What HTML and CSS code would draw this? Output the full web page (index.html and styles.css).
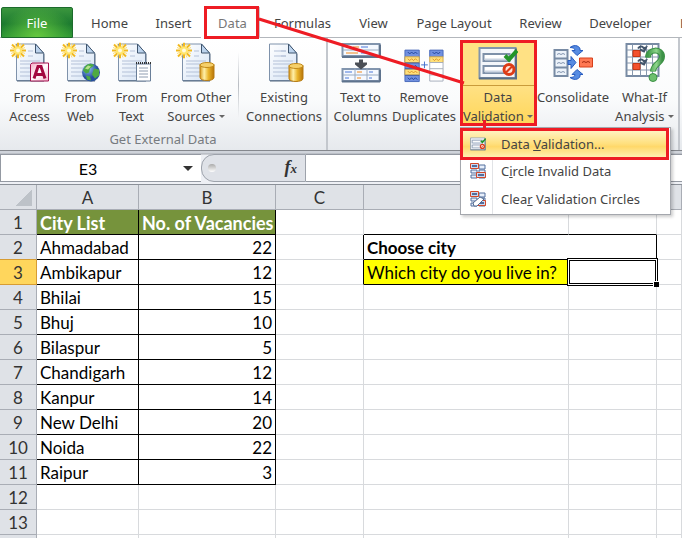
FILE: index.html
```html
<!DOCTYPE html>
<html lang="en">
<head>
<meta charset="utf-8">
<title>City List - Data Validation</title>
<link rel="stylesheet" href="styles.css">
</head>
<body>
<svg class="defs" aria-hidden="true">
  <defs>
    <linearGradient id="paper" x1="0" y1="0" x2="1" y2="1"><stop offset="0" stop-color="#fff"/><stop offset="1" stop-color="#d5e3f5"/></linearGradient>
    <linearGradient id="gold" x1="0" x2="1"><stop offset="0" stop-color="#d99a1c"/><stop offset=".3" stop-color="#fff0a8"/><stop offset=".6" stop-color="#eab52c"/><stop offset="1" stop-color="#b87408"/></linearGradient>
    <linearGradient id="pink" x1="0" y1="0" x2="1" y2="1"><stop offset="0" stop-color="#f7a9c4"/><stop offset=".5" stop-color="#fff"/><stop offset="1" stop-color="#f2b3ca"/></linearGradient>
    <radialGradient id="sea" cx=".35" cy=".3"><stop offset="0" stop-color="#8fc1f5"/><stop offset="1" stop-color="#274e9d"/></radialGradient>
    <linearGradient id="leaf" x1="0" x2="1"><stop offset="0" stop-color="#3f9a48"/><stop offset=".6" stop-color="#8fd68c"/><stop offset="1" stop-color="#3c9146"/></linearGradient>
    <symbol id="doc" viewBox="0 0 40 40">
      <path d="M6.500 1.500h19l8 9v27.500h-27z" fill="url(#paper)" stroke="#7f92ab"/>
      <path d="M7 38.500h27M34 11v27" stroke="#52677f" fill="none"/>
      <path d="M25.500 1.500v9h8z" fill="#bcd3ed" stroke="#40566f"/>
      <path d="M18 8.500h5M18 13.500h5M10 18.500h20M10 21.500h20M10 25.500h20M10 29.500h20M10 33.500h18" stroke="#b4c1d8"/>
    </symbol>
    <symbol id="spark" viewBox="0 0 16 16">
      <path d="M8 0v16M0 8h16M2 2l12 12M14 2L2 14" stroke="#f2b91e" stroke-width="2"/>
      <path d="M5 1l6 14M11 1L5 15M1 5l14 6M15 5L1 11" stroke="#ffdf6b"/>
      <circle cx="8" cy="8" r="4" fill="#ffe56e"/><circle cx="8" cy="8" r="2" fill="#fffbe0"/>
    </symbol>
    <symbol id="drum" viewBox="0 0 16 20">
      <path d="M1 3v13c0 4 14 4 14 0V3z" fill="url(#gold)" stroke="#b77c14"/>
      <ellipse cx="8" cy="3.500" rx="7" ry="2.500" fill="#f6d06a" stroke="#c28a1b"/>
    </symbol>
    <symbol id="rules" viewBox="0 0 40 34">
      <path d="M1.500 1.500h36v30h-36z" fill="#f3f6fa" stroke="#8195ad" stroke-width="2"/>
      <path d="M1 32h37M38 2v31" stroke="#586e87" stroke-width="2"/>
      <path d="M5.500 7.500h26v7h-26zM5.500 19.500h26v7h-26z" fill="#fff" stroke="#7e91a9" stroke-width="2"/>
      <path d="M7 13h23M7 25h23" stroke="#ccd5e2" stroke-width="2"/>
      <path d="M27 9l4 4 8-9" fill="none" stroke="#239528" stroke-width="4"/>
      <circle cx="31" cy="23" r="5" fill="#ffe3d8" stroke="#dd3c16" stroke-width="3"/>
      <path d="M28 26l6-6" stroke="#dd3c16" stroke-width="2"/>
    </symbol>
    <symbol id="cells" viewBox="0 0 16 16">
      <path d="M1 1h6v4H1zM9 2h6v4H9zM1 7h6v3H1zM9 7h6v3H9zM1 12h6v3H1zM9 12h6v3H9z" fill="#e7effb" stroke="#536e9c"/>
      <path d="M.5 .5h8v5h-8zM6.500 9.500h9v5h-9z" fill="#cad9f3" stroke="#d2492a"/>
      <path d="M2 3h5M8 12h6" stroke="#536e9c" stroke-width="2"/>
    </symbol>
  </defs>
</svg>

<div class="app">
  <nav class="tabs" aria-label="Ribbon tabs">
    <button class="file">File</button>
    <button class="tab">Home</button>
    <button class="tab">Insert</button>
    <button class="tab active">Data</button>
    <button class="tab">Formulas</button>
    <button class="tab">View</button>
    <button class="tab">Page Layout</button>
    <button class="tab">Review</button>
    <button class="tab">Developer</button>
    <button class="tab last">Load Test</button>
  </nav>

  <div class="ribbon">
    <section class="group">
      <div class="tools external">
        <button class="tool">
          <svg viewBox="0 0 40 40"><use href="#doc" width="40" height="40"/><use href="#spark" width="16" height="16"/><path d="M22 20.500h16.500v18H20.500V22z" fill="url(#pink)" stroke="#a5114f"/><path d="M24 36l4-12h3l4 12M26 32h8" fill="none" stroke="#a3073f" stroke-width="3"/></svg>
          <span>From<br>Access</span>
        </button>
        <button class="tool">
          <svg viewBox="0 0 40 40"><use href="#doc" width="40" height="40"/><use href="#spark" width="16" height="16"/><circle cx="30" cy="30" r="9" fill="url(#sea)"/><path d="M24 24c3-4 8-3 9-1l-4 3-1 4-3 1-3-3zM33 26l5 1v6l-4 3-3-4zM25 33l4 1 1 4-4-1z" fill="#4eaa43"/><path d="M24 26l3-3 3 1-3 3z" fill="#b7e38f"/></svg>
          <span>From<br>Web</span>
        </button>
        <button class="tool">
          <svg viewBox="0 0 40 40"><use href="#doc" width="40" height="40"/><use href="#spark" width="16" height="16"/><path d="M24.500 21.500h14v17h-14z" fill="#fff" stroke="#6a7f99"/><path d="M24 20.500h15" stroke="#333" stroke-width="2" stroke-dasharray="1 1"/><path d="M27 25.500h9M27 28.500h9M27 31.500h9M27 34.500h9" stroke="#8e9cb0"/></svg>
          <span>From<br>Text</span>
        </button>
        <button class="tool">
          <svg viewBox="0 0 40 40"><use href="#doc" width="40" height="40"/><use href="#spark" width="16" height="16"/><use href="#drum" x="23" y="19" width="16" height="20"/></svg>
          <span>From Other<br>Sources <i class="caret"></i></span>
        </button>
        <i class="divider"></i>
        <button class="tool">
          <svg viewBox="0 0 40 40"><use href="#doc" x="-1" width="40" height="40"/><path d="M10 8.500h12M10 13.500h12" stroke="#b4c1d8"/><use href="#drum" x="24" y="20" width="16" height="20"/></svg>
          <span>Existing<br>Connections</span>
        </button>
      </div>
      <h2>Get External Data</h2>
    </section>
    <section class="group">
      <div class="tools data">
        <button class="tool">
          <svg viewBox="0 0 40 40"><path d="M1.500 1.500h37v12h-37zM1.500 26.500h37v12h-37z" fill="#f5f9ff" stroke="#8295ae" stroke-width="2"/><path d="M2 7.500h36M2 32.500h36M14 26v12M26 26v12" stroke="#9aabc0"/><path d="M1 14.500h38M1 39h38M39 2v12M39 27v12" stroke="#5e738d" stroke-width="2"/><path d="M5 4.500h5M20 4.500h7M20 10.500h9M4 29.500h7M28 29.500h4M4 35.500h4M28 35.500h3" stroke="#4a79d9"/><path d="M12 4.500h6M5 10.500h12M16 29.500h5M16 35.500h4" stroke="#f28a1c"/><path d="M18 17h4v3h4v2l-6 5-6-5v-2h4z" fill="#4a4e55"/></svg>
          <span>Text to<br>Columns</span>
        </button>
        <button class="tool">
          <svg viewBox="0 0 42 40"><path d="M1 7h15v33H1zM27 7h14v7H27z" fill="#7190df" stroke="#4768b9"/><path d="M1 14h15v6H1zM1 27h15v6H1zM27 14h14v6H27z" fill="#ffe07a" stroke="#c9a350"/><path d="M1 20.500h15M1 26.500h15M1 33.500h15" stroke="#3e5ca7"/><path d="M27 20h14v19.500H27zM27 26.500h14M27 33h14" fill="#fff" stroke="#a5adba"/><path d="M4 9l2 2 2-2 2 2 2-2 2 2M4 23l2 2 2-2 2 2 2-2 2 2M4 36l2 2 2-2 2 2 2-2 2 2M30 9l2 2 2-2 2 2 2-2" stroke="#20439a" fill="none"/><path d="M4 16l2 2 2-2 2 2 2-2 2 2M4 29l2 2 2-2 2 2 2-2 2 2M30 16l2 2 2-2 2 2 2-2" stroke="#dc9425" fill="none"/><path d="M18 22.500h7M21.500 19v7" stroke="#416ecb" stroke-width="1"/></svg>
          <span>Remove<br>Duplicates</span>
        </button>
        <button class="tool selected" aria-expanded="true">
          <svg viewBox="0 0 40 40"><use href="#rules" y="4" width="40" height="34"/></svg>
          <span>Data<br>Validation <i class="caret"></i></span>
        </button>
        <button class="tool">
          <svg viewBox="0 0 40 40"><path d="M1.500 7.500h13v26h-13zM1 16h14M1 25h14" fill="#edf3fa" stroke="#788ba4" stroke-width="2"/><path d="M4 12l2-1 2 1 2-1 2 1M4 21l2-1 2 1 2-1 2 1M4 30l2-1 2 1 2-1 2 1" fill="none" stroke="#8294ae"/><path d="M15 18h3v-4l5 6-5 6v-4h-3zM17 5c5-4 11-1 10 3h3l-6 5-5-5h3c0-2-2-3-5-3zM17 35c5 4 11 1 10-3h3l-6-5-5 5h3c0 2-2 3-5 3z" fill="#568be2" stroke="#285cc0" stroke-width="1"/><path d="M26.500 15.500h13v9h-13z" fill="#ff7954" stroke="#d7401a"/><path d="M29 20l2-1 2 1 2-1 2 1" fill="none" stroke="#a42a12"/></svg>
          <span>Consolidate<br>&nbsp;</span>
        </button>
        <button class="tool">
          <svg viewBox="0 0 40 40"><path d="M1.500 1.500h32v32h-32z" fill="#fff" stroke="#788ba4" stroke-width="2"/><path d="M7.500 2v31M15.500 2v31M21.500 2v31M27.500 2v31M2 7.500h31M2 14.500h31M2 20.500h31M2 27.500h31" stroke="#8798ae" stroke-width="1"/><path d="M8 8h7v6H8zM8 21h7v6H8z" fill="#f4512d" stroke="#c63714"/><path d="M13 6c3-4 6-1 5 0l3-1-2 4-4-2M13 19c3-4 6-1 5 0l3-1-2 4-4-2" fill="none" stroke="#44566c" stroke-width="2"/><path d="M23 15c0-9 14-9 14-1 0 7-9 7-9 15" fill="none" stroke="#3c9146" stroke-width="6"/><path d="M23 15c0-9 14-9 14-1 0 7-9 7-9 15" fill="none" stroke="url(#leaf)" stroke-width="4"/><circle cx="28" cy="35" r="4" fill="#6ec06e" stroke="#3c9146"/></svg>
          <span>What-If<br>Analysis <i class="caret"></i></span>
        </button>
      </div>
    </section>
  </div>

  <div class="formula">
    <button class="namebox"><span>E3</span><i class="arrow"></i></button>
    <div class="fx"><i class="knob"></i><b>f<small>x</small></b></div>
    <input class="entry" type="text" aria-label="Formula">
  </div>

  <table class="sheet">
    <colgroup><col class="c-head"><col class="c-a"><col class="c-b"><col class="c-c"><col class="c-d"><col class="c-e"><col></colgroup>
    <thead>
      <tr><th class="corner"></th><th>A</th><th>B</th><th>C</th><th></th><th></th><th></th></tr>
    </thead>
    <tbody>
      <tr><th>1</th><td class="title">City List</td><td class="title">No. of Vacancies</td><td></td><td class="above"></td><td class="above"></td><td></td></tr>
      <tr><th class="before">2</th><td class="box">Ahmadabad</td><td class="box num">22</td><td class="edge"></td><td class="box choose" colspan="2">Choose city</td><td></td></tr>
      <tr><th class="current">3</th><td class="box">Ambikapur</td><td class="box num">12</td><td class="edge"></td><td class="box question">Which city do you live in?</td><td class="cursor"><i></i></td><td></td></tr>
      <tr><th>4</th><td class="box">Bhilai</td><td class="box num">15</td><td></td><td></td><td></td><td></td></tr>
      <tr><th>5</th><td class="box">Bhuj</td><td class="box num">10</td><td></td><td></td><td></td><td></td></tr>
      <tr><th>6</th><td class="box">Bilaspur</td><td class="box num">5</td><td></td><td></td><td></td><td></td></tr>
      <tr><th>7</th><td class="box">Chandigarh</td><td class="box num">12</td><td></td><td></td><td></td><td></td></tr>
      <tr><th>8</th><td class="box">Kanpur</td><td class="box num">14</td><td></td><td></td><td></td><td></td></tr>
      <tr><th>9</th><td class="box">New Delhi</td><td class="box num">20</td><td></td><td></td><td></td><td></td></tr>
      <tr><th>10</th><td class="box">Noida</td><td class="box num">22</td><td></td><td></td><td></td><td></td></tr>
      <tr><th>11</th><td class="box">Raipur</td><td class="box num">3</td><td></td><td></td><td></td><td></td></tr>
      <tr><th>12</th><td></td><td></td><td></td><td></td><td></td><td></td></tr>
      <tr><th>13</th><td></td><td></td><td></td><td></td><td></td><td></td></tr>
      <tr><th></th><td></td><td></td><td></td><td></td><td></td><td></td></tr>
    </tbody>
  </table>

  <div class="menu">
    <button class="hot"><svg viewBox="0 0 40 34"><use href="#rules" width="40" height="34"/></svg><span>Data <u>V</u>alidation...</span></button>
    <button><svg viewBox="0 0 16 16"><use href="#cells" width="16" height="16"/></svg><span>C<u>i</u>rcle Invalid Data</span></button>
    <button><svg viewBox="0 0 16 16"><use href="#cells" width="16" height="16"/><path d="M3 12l7-6 4 2-7 7H4z" fill="#fff" stroke="#516a91"/></svg><span>Clea<u>r</u> Validation Circles</span></button>
  </div>

  <svg class="marks" viewBox="0 0 682 160" aria-hidden="true">
    <g fill="none" stroke="#ee1c24" stroke-width="3">
      <path d="M205.500 7.500h52v30h-52zM461.500 41.500h74v83h-74z"/>
      <path d="M259 19L464 83M484.500 120v10"/>
    </g>
  </svg>
</div>
</body>
</html>
```

FILE: styles.css
```css
* { box-sizing: border-box; }
body {
  margin: 0;
  background: #fff;
  color: #000;
  font-family: "Noto Sans", "Open Sans", sans-serif;
  font-size: 13px;
}
button {
  margin: 0;
  padding: 0;
  border: 0;
  background: none;
  color: #444;
  font: inherit;
  white-space: nowrap;
}
.defs { position: absolute; width: 0; height: 0; }
.app { position: relative; height: 100vh; overflow: hidden; }

/* Ribbon tabs */
.tabs {
  display: grid;
  grid-template-columns: 72px 73px 55px 59px 85px 57px 104px 69px 91px 1fr;
  height: 38px;
  padding: 7px 0 0 1px;
  background: linear-gradient(#b3b7bc, #b3b7bc) bottom / 100% 1px no-repeat #fff;
}
.file {
  border: 1px solid #1c6b2c;
  border-radius: 2px 2px 0 0;
  background: radial-gradient(ellipse at bottom, #65c83f, transparent 75%), linear-gradient(#3b963e, #1c7a30 55%, #2d9634);
  color: #fff;
}
.tab.active { padding-left: 5px; border-right: 1px solid #c8cbd0; background: #fff; color: #777; }
.tab.last { padding-left: 14px; overflow: hidden; text-align: left; }

/* Ribbon groups */
.ribbon {
  display: flex;
  height: 113px;
  border-bottom: 1px solid #85888e;
  background: linear-gradient(#fff, #fafbfc 55%, #e6e9ed);
}
.group { border-right: 2px solid #c3c7cd; }
.tools { display: grid; padding-top: 4px; }
.external { grid-template-columns: 51px 51px 51px 78px 7px 84px; padding-left: 4px; }
.data { grid-template-columns: 65px 62px 80px 76px 67px; }
.tool {
  display: flex;
  flex-direction: column;
  align-items: center;
  gap: 5px;
  line-height: 19px;
}
.tool svg { width: 40px; height: 41px; flex: none; }
.tool.selected { margin-left: 6px; background: linear-gradient(#ffe184 43px, #c99b3a 43px, #c99b3a 44px, #ffe184 44px, #ffd657); }
.divider { width: 1px; height: 66px; margin: 10px 3px 0; background: linear-gradient(transparent, #b9bdc3, transparent); }
.caret {
  display: inline-block;
  border: 3px solid transparent;
  border-top-color: #666;
  border-bottom: 0;
  vertical-align: 3px;
}
.group h2 {
  margin: 4px 0 0;
  color: #777b80;
  font-size: 13px;
  font-weight: 400;
  line-height: 18px;
  text-align: center;
}

/* Formula bar */
.formula {
  display: grid;
  grid-template-columns: 201px 105px 1fr;
  height: 34px;
  padding: 3px 0 4px;
  border-bottom: 1px solid #8b9098;
  background: linear-gradient(#cfd3da 2px, #a7abb2 3px, #eef0f5 4px);
}
.namebox {
  display: grid;
  grid-template-columns: 1fr 26px;
  align-items: center;
  border: 1px solid #9499a2;
  border-right: 0;
  background: #fff;
  color: #000;
  font-family: Lato, sans-serif;
  font-size: 16px;
}
.arrow { border: 5px solid transparent; border-top-color: #333; border-bottom: 0; justify-self: center; }
.fx {
  display: flex;
  align-items: center;
  justify-content: space-between;
  padding: 0 8px 0 6px;
  border: 1px solid #9da2ab;
  border-radius: 13px 0 0 13px;
  background: #dfe2e8;
  color: #333;
  font: italic 18px/24px "Liberation Serif", serif;
}
.fx small { font-size: 13px; }
.knob { width: 8px; height: 8px; border-radius: 4px; background: linear-gradient(#aaa, #fff); }
.entry { min-width: 0; border: solid #9499a2; border-width: 1px 0; background: #fff; }

/* Worksheet */
.sheet {
  width: 100%;
  border-spacing: 0;
  table-layout: fixed;
  font: 17px/22px Lato, sans-serif;
}
.c-head { width: 37px; }
.c-a { width: 102px; }
.c-b { width: 137px; }
.c-c { width: 88px; }
.c-d { width: 205px; }
.c-e { width: 88px; }
.sheet th, .sheet td {
  height: 25px;
  padding: 2px 3px 0;
  border: solid #d8dadd;
  border-width: 0 1px 1px 0;
  white-space: nowrap;
}
.sheet th { border-color: #a9adb5; background: #dfe2e7; color: #333; font-weight: 400; }
.sheet .corner { background: linear-gradient(135deg, transparent 50%, #bdc2c8 50%) 16px 5px / 16px 16px no-repeat #dfe2e7; }
.sheet .before { border-bottom-color: #d79c33; }
.sheet .current { border-color: #d79c33; background: #ffd65c; }
.sheet .title { border-color: #000; background: #76933c; color: #fff; font-size: 18px; font-weight: 700; }
.sheet .box { border-color: #000; }
.sheet .num { text-align: right; }
.sheet .above { border-bottom-color: #000; }
.sheet .edge { border-right-color: #000; }
.sheet .choose { font-weight: 700; }
.sheet .question { background: #ff0; }
.sheet .cursor { position: relative; }
.cursor i { position: absolute; inset: -2px; border: 3px double #000; background: #fff; }
.cursor i::after { content: ""; position: absolute; right: -4px; bottom: -4px; width: 5px; height: 5px; border: solid #fff; border-width: 1px 0 0 1px; background: #000; }

/* Drop-down menu */
.menu {
  position: absolute;
  top: 127px;
  left: 460px;
  width: 211px;
  padding: 0 1px 1px;
  border: 1px solid #a4a7ad;
  background: linear-gradient(#e1e3e6, #e1e3e6) 31px 0 / 1px 100% no-repeat #fff;
  box-shadow: 2px 2px 3px #0003;
}
.menu button {
  display: grid;
  grid-template-columns: 16px 1fr;
  gap: 15px;
  align-items: center;
  width: 100%;
  height: 28px;
  padding-left: 8px;
  text-align: left;
}
.menu svg { width: 16px; height: 16px; }
.menu .hot {
  width: 209px;
  height: 32px;
  margin: 0 0 -3px -2px;
  padding-left: 7px;
  border: 3px solid #ee1c24;
  background: linear-gradient(#fff3c0, #ffdf7c 50%, #ffd86a 60%, #fff0b0);
}

/* Annotation strokes */
.marks { position: absolute; top: 0; left: 0; width: 682px; height: 160px; pointer-events: none; }
```
